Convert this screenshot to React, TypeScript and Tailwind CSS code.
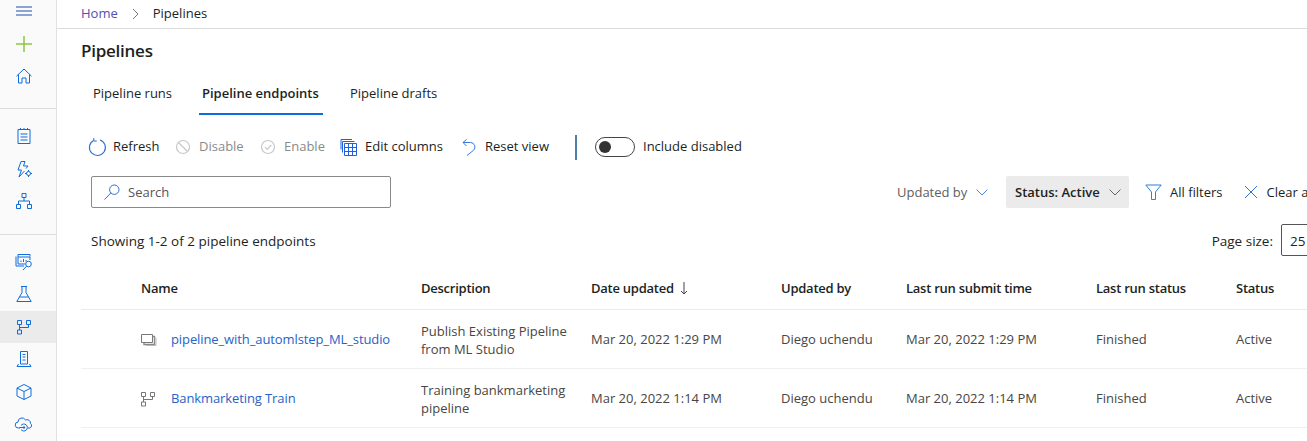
import React from "react";

const B = "#0f6cdb";
const Ico = ({ s = 20, vb = 20, c = B, children, w = 1 }: { s?: number; vb?: number; c?: string; children: React.ReactNode; w?: number }) => (
  <svg width={s} height={s} viewBox={`0 0 ${vb} ${vb}`} fill="none" stroke={c} strokeWidth={w} className="shrink-0">{children}</svg>
);

const Hamburger = () => <Ico c="#1f4fa8"><path d="M2 6h16M2 10h16M2 14h16" /></Ico>;
const Plus = () => <Ico s={20} vb={20} c="#8cc63f" w={1.5}><path d="M10 2v16M2 10h16" /></Ico>;
const Home = () => <Ico><path d="M2.500 10.200 10 3l7.500 7.200M4.500 8.500V17h3.500v-5h4v5h3.500V8.500" /></Ico>;
const Notebook = () => <Ico><path d="M4 3.500h12v14H4zM6.500 2v2M10 2v2M13.500 2v2M6.500 8h7M6.500 11h7M6.500 14h7" /></Ico>;
const AutoML = () => <Ico><path d="M11 2.500H7L4 11h3.500L5 18l5.500-6M11 2.500 9.500 7H14l-2 2.500" /><circle cx="14.500" cy="14.500" r="2" /><path d="M14.500 11v1.500M14.500 16.500V18M11 14.500h1.500M16.500 14.500H18" /></Ico>;
const Designer = () => <Ico><path d="M8 2.500h4v4H8zM2.500 13.500h4v4h-4zM13.500 13.500h4v4h-4zM10 6.500v3.500M4.500 13.500V10h11v3.500" /></Ico>;
const Data = () => <Ico><path d="M4 2.500h12v2M4 2.500v9.500h7M2 4.500v9.500h8" /><path d="M4 5h12v3" /><path d="M7 10V8.500M9.500 10V7M12 9.500V8" /><circle cx="14.500" cy="12" r="2.800" /><path d="M12.500 14.200 9 18" /></Ico>;
const Flask = () => <Ico><path d="M7 2.500h6M8 2.500v6L2.800 17.500h14.400L12 8.500v-6M5.500 13h9" /></Ico>;
const Pipe = ({ c = B }: { c?: string }) => <Ico c={c}><path d="M3.500 3.500h4v4h-4zM12.500 3.500h4v4h-4zM3.500 13h4v4h-4zM5.500 7.500V13M5.500 10.500h9v-3" /></Ico>;
const Compute = () => <Ico><path d="M6.500 2.500h7v12.500h-7zM8.500 5.500h3M8.500 8h3M8.500 11h3M4.500 15l-1.500 2.500h14L15.500 15" /></Ico>;
const Cube = () => <Ico><path d="M10 2.500 17 6v8l-7 3.500L3 14V6zM3 6l7 3.500L17 6M10 9.500v8" /></Ico>;
const Endpoint = () => <Ico><path d="M6 14H4.500a3 3 0 0 1-.5-6 4 4 0 0 1 7.500-2 3.500 3.500 0 0 1 5 3.500 2.500 2.500 0 0 1-1 4.500H14" /><path d="M7 11.500a3.500 3.500 0 1 1 0 4" /><path d="M5.500 13.500h5" /><circle cx="10" cy="13.500" r="0.800" fill={B} /></Ico>;

const Refresh = () => <Ico><path d="M6.500 3.500A8 8 0 1 0 13 2.900" stroke="#2f6fd6" strokeWidth={1.1} /><path d="M6.800 1v3h3" stroke="#2f6fd6" /></Ico>;
const Disable = () => <Ico s={16} vb={16} c="#c8c8c8" w={1.2}><circle cx="8" cy="8" r="6.500" /><path d="M3.500 3.500l9 9" /></Ico>;
const Enable = () => <Ico s={16} vb={16} c="#c8c8c8" w={1.2}><circle cx="8" cy="8" r="6.500" /><path d="M5 8.200l2.200 2.200L11.300 6" /></Ico>;
const Columns = () => <Ico s={17} vb={17} c="#2060e0"><path d="M1 .500h11M1 .500v10M2.500 2.500h12M2.500 2.500v11" /><path d="M4.500 4.500h12v12h-12zM4.500 8.500h12M4.500 12.500h12M8.500 4.500v12M12.500 4.500v12" /></Ico>;
const Reset = () => <Ico s={17} vb={17} c="#3b78dc"><path d="M2 3.500h7.500a4.500 4.500 0 0 1 3 7.800L6 16.500" /><path d="M5.500 .500l-3.500 3 3.500 3.500" /></Ico>;
const Search = () => <Ico s={16} vb={16} c="#2f6fd6"><circle cx="10.300" cy="5.700" r="4.700" /><path d="M6.800 9 .5 15.500" /></Ico>;
const Chevron = () => <Ico s={12} vb={12} c="#4c83dd"><path d="M.5 3.500 6 9l5.500-5.500" /></Ico>;
const ChevronG = () => <Ico s={12} vb={12} c="#666"><path d="M.5 3.500 6 9l5.500-5.500" /></Ico>;
const Funnel = () => <Ico s={17} vb={17} c="#2f7fdc"><path d="M.8 1h15.400L10.500 8v7.500h-4V8z" /></Ico>;
const Close = () => <Ico s={14} vb={14} c="#2f6fd6"><path d="M1 1l12 12M13 1 1 13" /></Ico>;
const Copies = () => <Ico s={16} vb={16} c="#777"><path d="M.5 2.500h11v8H.5z" /><path d="M11.500 4.500h2v8H3v-2" stroke="#888" strokeWidth={1.4} /><path d="M13.500 6h1.500v7.500H5" stroke="#bbb" /></Ico>;

const Side = ({ children, active, tall }: { children: React.ReactNode; active?: boolean; tall?: boolean }) => (
  <div className={`flex w-full items-center pl-[14px] ${tall ? "h-[32px]" : "h-[32.500px]"} ${active ? "bg-[#ebebeb]" : ""}`}>{children}</div>
);

const Act = ({ icon, label, off, cls }: { icon: React.ReactNode; label: string; off?: boolean; cls: string }) => (
  <div className={`flex items-center ${cls}`}>
    {icon}
    <span className={off ? "text-[#8a8a8a]" : "text-[#201f1e]"}>{label}</span>
  </div>
);

const cols = "grid grid-cols-[60px_280px_170px_190px_125px_190px_140px_1fr] items-center";

const rows = [
  { icon: <Copies />, name: "pipeline_with_automlstep_ML_studio", d1: "Publish Existing Pipeline", d2: "from ML Studio", t: "Mar 20, 2022 1:29 PM" },
  { icon: <div className="-ml-[3px]"><Pipe c="#777" /></div>, name: "Bankmarketing Train", d1: "Training bankmarketing", d2: "pipeline", t: "Mar 20, 2022 1:14 PM" },
];

export default function App() {
  return (
    <div className="flex h-[441px] w-[1307px] overflow-hidden bg-white text-[13px] text-[#201f1e]" style={{ fontFamily: "'Open Sans','Noto Sans',sans-serif" }}>
      <aside className="flex w-[57px] shrink-0 flex-col border-r border-[#e1e1e1] bg-[#fafafa]">
        <div className="flex h-[22px] items-center pl-[14px]"><Hamburger /></div>
        <div className="mt-[6px]"><Side tall><Plus /></Side><Side tall><Home /></Side></div>
        <div className="mt-4 h-px bg-[#dcdcdc]" />
        <div className="mt-[11px]"><Side><Notebook /></Side><Side><AutoML /></Side><Side><Designer /></Side></div>
        <div className="mt-4 h-px bg-[#dcdcdc]" />
        <div className="mt-[11px]"><Side><Data /></Side><Side><Flask /></Side><Side active><Pipe /></Side><Side><Compute /></Side><Side><Cube /></Side><Side><Endpoint /></Side></div>
      </aside>

      <main className="flex min-w-0 flex-1 flex-col">
        <div className="flex h-[29px] shrink-0 items-center border-b border-[#dcdcdc] pl-[24px]">
          <span className="text-[#5150b0]">Home</span>
          <svg width="8" height="12" viewBox="0 0 8 12" fill="none" stroke="#777" className="ml-[14px] mr-[13px]"><path d="M1 1l5 5-5 5" /></svg>
          <span>Pipelines</span>
        </div>

        <div className="pl-[24px]">
          <h1 className="mt-[10px] text-[17px] font-semibold leading-[24px] tracking-[-0.25px]">Pipelines</h1>

          <div className="mt-[10px] flex h-[42px] text-[13px]">
            <div className="flex w-[118px] items-center pl-[12px]">Pipeline runs</div>
            <div className="flex w-[124px] items-center border-b-2 border-[#0f6cdb] pl-[3px] pt-[2px] font-semibold"><span className="whitespace-nowrap">Pipeline endpoints</span></div>
            <div className="ml-[27px] flex items-center">Pipeline drafts</div>
          </div>

          <div className="mt-[15px] flex h-[34px] items-center pl-[6px]">
            <Act cls="gap-[6px] w-[88px]" icon={<Refresh />} label="Refresh" />
            <Act cls="gap-[8px] w-[85px]" icon={<Disable />} label="Disable" off />
            <Act cls="gap-[8px] w-[80px]" icon={<Enable />} label="Enable" off />
            <Act cls="gap-[8px] w-[121px]" icon={<Columns />} label="Edit columns" />
            <Act cls="gap-[7px] w-[114px]" icon={<Reset />} label="Reset view" />
            <div className="h-[25px] w-[2px] bg-[#4d7fa8]" />
            <div className="ml-[18px] flex h-[20px] w-[40px] items-center rounded-full border border-[#444] px-[3px]">
              <div className="h-[12px] w-[12px] rounded-full bg-[#333]" />
            </div>
            <span className="ml-[8px]">Include disabled</span>
          </div>

          <div className="mt-[12px] flex h-[32px] items-center">
            <div className="ml-[10px] flex h-[32px] w-[300px] shrink-0 items-center gap-[8px] rounded-[2px] border border-[#8a8a8a] pl-[12px] text-[#555]">
              <Search />
              <span className="pt-[2px]">Search</span>
            </div>
            <div className="ml-[506px] flex w-[109px] shrink-0 items-center gap-[9px] text-[#605e5c]"><span className="whitespace-nowrap pt-[2px]">Updated by</span><Chevron /></div>
            <div className="flex h-[32px] w-[123px] shrink-0 items-center justify-between rounded-[2px] bg-[#ebebeb] pl-[9px] pr-[8px] font-semibold"><span className="whitespace-nowrap pt-[2px]">Status: Active</span><ChevronG /></div>
            <div className="ml-[16px] flex shrink-0 items-center gap-[8px]"><Funnel /><span className="whitespace-nowrap pt-[2px]">All filters</span></div>
            <div className="ml-[21px] flex shrink-0 items-center gap-[9px]"><Close /><span className="whitespace-nowrap pt-[2px]">Clear all</span></div>
          </div>

          <div className="mt-[16px] flex h-[32px] items-center justify-between pl-[10px] text-[13.500px]">
            <span className="pt-[2px]">Showing 1-2 of 2 pipeline endpoints</span>
            <div className="-mr-[34px] flex items-center">
              <span className="pt-[2px] font-medium">Page size:</span>
              <div className="ml-[8px] flex h-[32px] w-[60px] shrink-0 items-center rounded-[2px] border border-[#555] pl-[8px] pt-[2px]">25</div>
            </div>
          </div>

          <div className="mt-[10px]">
            <div className={`${cols} h-[44px] border-b border-[#ebebeb] pt-[2px] font-semibold tracking-[-0.25px]`}>
              <div />
              <div>Name</div>
              <div>Description</div>
              <div className="flex items-center gap-[6px]">Date updated <svg width="8" height="13" viewBox="0 0 8 13" fill="none" stroke="#444"><path d="M4 0v12M1 9l3 3 3-3" /></svg></div>
              <div>Updated by</div>
              <div>Last run submit time</div>
              <div>Last run status</div>
              <div>Status</div>
            </div>
            {rows.map((r) => (
              <div key={r.name} className={`${cols} h-[59px] border-b border-[#f0f0f0] pt-[2px]`}>
                <div />
                <div className="flex items-center whitespace-nowrap text-[#2563c9] tracking-[-0.1px]"><div className="w-[30px] shrink-0">{r.icon}</div>{r.name}</div>
                <div className="leading-[18px] text-[#484644]">{r.d1}<br />{r.d2}</div>
                <div className="text-[#484644]">{r.t}</div>
                <div className="text-[#484644]">Diego uchendu</div>
                <div className="text-[#484644]">{r.t}</div>
                <div className="text-[#484644]">Finished</div>
                <div className="text-[#484644]">Active</div>
              </div>
            ))}
          </div>
        </div>
      </main>
    </div>
  );
}
